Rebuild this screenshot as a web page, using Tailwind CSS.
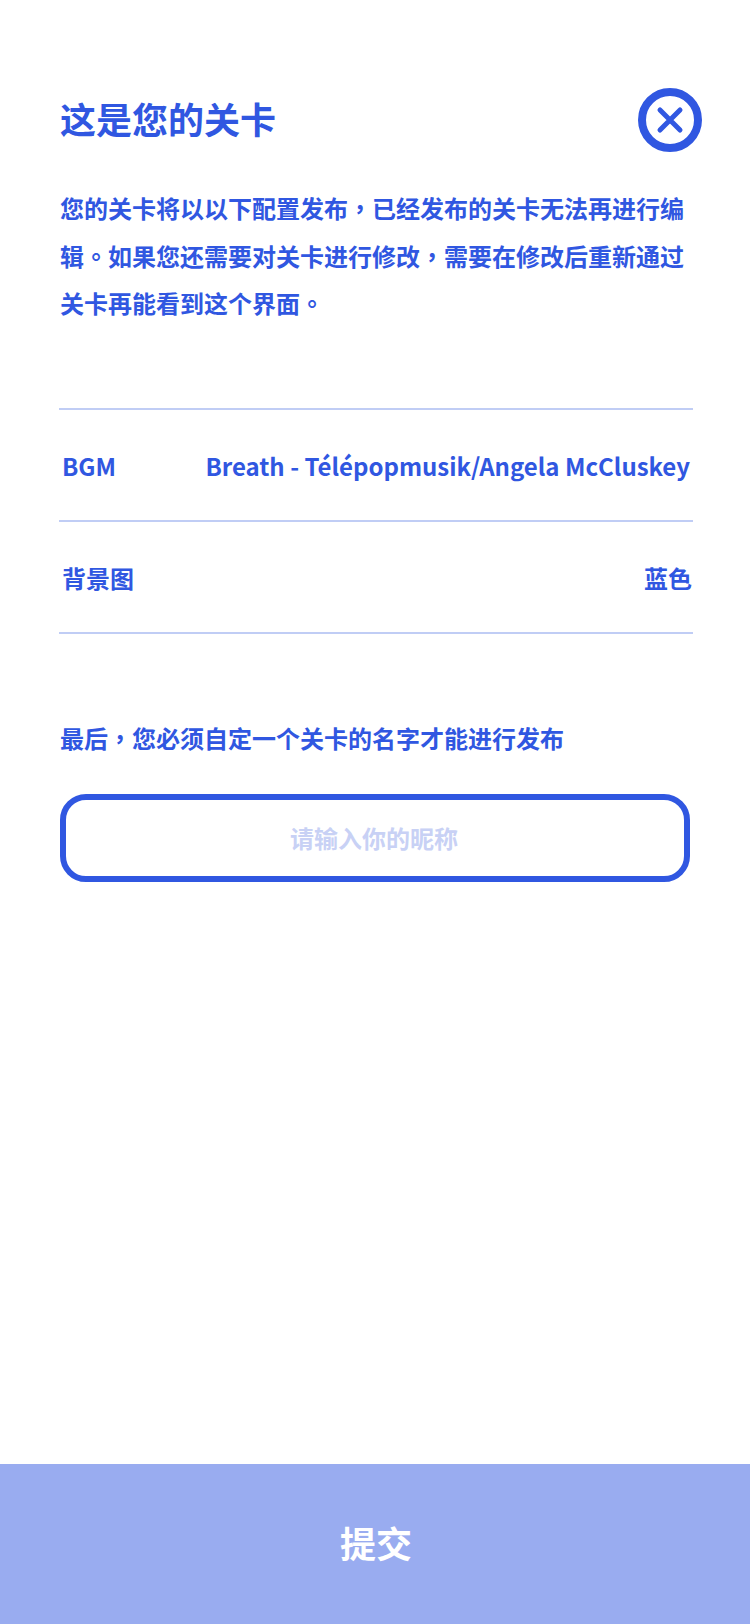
<!DOCTYPE html>
<html lang="zh-Hans">
<head>
    <meta charset="UTF-8">
    <title>这是您的关卡</title>
    <script src="https://cdn.jsdelivr.net/npm/@tailwindcss/browser@4"></script>
</head>
<body class="bg-white">
    <div class="flex flex-col w-[750px] h-[1624px] text-[#3057e1] font-['Noto_Sans_CJK_SC',sans-serif]">
        <div class="flex-1">
            <!-- header -->
            <div class="flex items-center justify-between pl-[60px] pr-[48px] pt-[88px]">
                <h1 class="text-[36px] leading-[60px] mb-[4px] font-bold">这是您的关卡</h1>
                <button class="w-[64px] h-[64px]">
                    <svg viewBox="0 0 64 64" class="w-[64px] h-[64px]" fill="none" stroke="#3057e1">
                        <circle cx="32" cy="32" r="28" stroke-width="8"/>
                        <path d="M22 22L42 42M42 22L22 42" stroke-width="5" stroke-linecap="round"/>
                    </svg>
                </button>
            </div>

            <!-- the screenshot has centred punctuation, so those glyphs come from the TC face -->
            <p class="mt-[32px] px-[60px] text-[24px] leading-[47.5px] font-bold">您的关卡将以以下配置发布<span lang="zh-Hant" class="font-['Noto_Sans_CJK_TC',sans-serif]">，</span>已经发布的关卡无法再进行编辑<span lang="zh-Hant" class="font-['Noto_Sans_CJK_TC',sans-serif]">。</span>如果您还需要对关卡进行修改<span lang="zh-Hant" class="font-['Noto_Sans_CJK_TC',sans-serif]">，</span>需要在修改后重新通过关卡再能看到这个界面<span lang="zh-Hant" class="font-['Noto_Sans_CJK_TC',sans-serif]">。</span></p>

            <!-- config rows -->
            <div class="mt-[81px] mx-[59px] w-[634px] border-t-2 border-[#c0cdf5]">
                <div class="flex items-center justify-between h-[112px] pl-[3px] pr-[3px] pt-[2px] border-b-2 border-[#c0cdf5] text-[24px] font-bold">
                    <span>BGM</span>
                    <span>Breath - Télépopmusik/Angela McCluskey</span>
                </div>
                <div class="flex items-center justify-between h-[112px] pl-[3px] pr-[1px] pt-[2px] border-b-2 border-[#c0cdf5] text-[24px] font-bold">
                    <span>背景图</span>
                    <span>蓝色</span>
                </div>
            </div>

            <p class="mt-[80px] px-[60px] text-[24px] leading-[48px] font-bold">最后<span lang="zh-Hant" class="font-['Noto_Sans_CJK_TC',sans-serif]">，</span>您必须自定一个关卡的名字才能进行发布</p>

            <div class="mt-[32px] mx-[60px] w-[630px] h-[88px] flex items-center justify-center pr-[2px] border-[6px] border-[#3057e1] rounded-[26px]">
                <span class="text-[24px] font-bold text-[#c8d1f5]">请输入你的昵称</span>
            </div>
        </div>

        <button class="h-[160px] pb-[4px] pl-[2px] bg-[#99acf0] text-white text-[36px] font-bold">提交</button>
    </div>
</body>
</html>
